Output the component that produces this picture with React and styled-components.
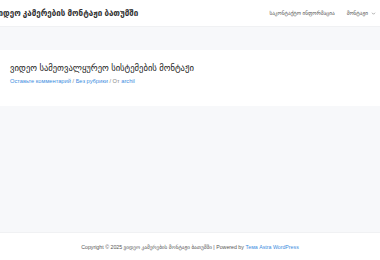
import styled, { createGlobalStyle } from "styled-components";

const GlobalStyle = createGlobalStyle`
  html, body {
    margin: 0;
    padding: 0;
  }
  body {
    background: #f7f8fa;
    font-family: "Liberation Sans", "DejaVu Sans", "Noto Sans", sans-serif;
    color: #3a3a3a;
  }
`;

const Page = styled.div`
  width: 380px;
  height: 260px;
  display: flex;
  flex-direction: column;
  overflow: hidden;
`;

const Header = styled.header`
  height: 27px;
  background: #fff;
  border-bottom: 1px solid #f0f1f3;
  display: flex;
  align-items: center;
  justify-content: space-between;
  padding-right: 4px;
  box-sizing: border-box;
`;

const SiteTitle = styled.a`
  margin-left: -6px;
  font-size: 8px;
  font-weight: 600;
  color: #333;
  text-decoration: none;
  white-space: nowrap;
`;

const Nav = styled.nav`
  display: flex;
  align-items: center;
  gap: 12px;
`;

const NavItem = styled.a`
  font-size: 5.3px;
  color: #555;
  text-decoration: none;
  display: flex;
  align-items: center;
  gap: 3px;
`;

const Main = styled.main`
  flex: 1;
  padding-top: 23px;
  display: flex;
  flex-direction: column;
`;

const Article = styled.article`
  background: #fff;
  padding: 13px 10px 22px;
  display: flex;
  flex-direction: column;
  gap: 5px;
`;

const Title = styled.h1`
  margin: 0;
  font-size: 8.6px;
  font-weight: 400;
  color: #222;
`;

const Meta = styled.div`
  font-size: 5.7px;
  color: #888;
`;

const MetaLink = styled.a`
  color: #3b8ce0;
  text-decoration: none;
`;

const Footer = styled.footer`
  height: 27px;
  background: #fff;
  border-top: 1px solid #f0f1f3;
  display: flex;
  align-items: center;
  justify-content: center;
  font-size: 5.25px;
  color: #555;
`;

const FooterLink = styled.a`
  color: #3b8ce0;
  text-decoration: none;
`;

function Chevron() {
  return (
    <svg width="5" height="5" viewBox="0 0 10 10">
      <path d="M2 3.5 L5 6.5 L8 3.5" fill="none" stroke="#777" strokeWidth="1.2" />
    </svg>
  );
}

export default function App() {
  return (
    <>
      <GlobalStyle />
      <Page>
        <Header>
          <SiteTitle href="#">ვიდეო კამერების მონტაჟი ბათუმში</SiteTitle>
          <Nav>
            <NavItem href="#">საკონტაქტო ინფორმაცია</NavItem>
            <NavItem href="#">
              მონტაჟი <Chevron />
            </NavItem>
          </Nav>
        </Header>
        <Main>
          <Article>
            <Title>ვიდეო სამეთვალყურეო სისტემების მონტაჟი</Title>
            <Meta>
              <MetaLink href="#">Оставьте комментарий</MetaLink> /{" "}
              <MetaLink href="#">Без рубрики</MetaLink> / От{" "}
              <MetaLink href="#">archil</MetaLink>
            </Meta>
          </Article>
        </Main>
        <Footer>
          <span>
            Copyright © 2025 ვიდეო კამერების მონტაჟი ბათუმში | Powered by{" "}
            <FooterLink href="#">Тема Astra WordPress</FooterLink>
          </span>
        </Footer>
      </Page>
    </>
  );
}
